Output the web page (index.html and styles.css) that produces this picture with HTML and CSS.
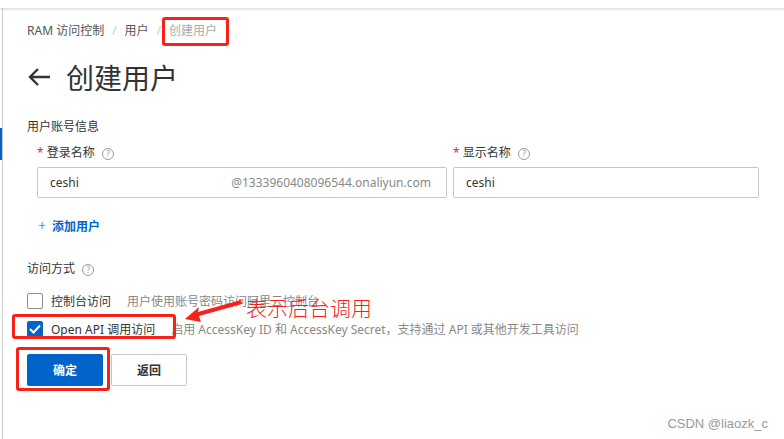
FILE: index.html
```html
<!DOCTYPE html>
<html lang="zh-CN">
<head>
    <meta charset="UTF-8">
    <meta name="viewport" content="width=device-width, initial-scale=1.0">
    <title>创建用户 - RAM 访问控制</title>
    <link rel="stylesheet" href="styles.css">
</head>
<body>

<div class="topbar"></div>

<div class="layout">
    <div class="rail"><div class="rail-mark"></div></div>

    <div class="page">
        <div class="breadcrumb">
            <span class="crumb">RAM 访问控制</span>
            <span class="sep">/</span>
            <span class="crumb">用户</span>
            <span class="sep">/</span>
            <span class="crumb current">创建用户</span>
        </div>

        <h1 class="title">
            <svg class="back" width="24" height="20" viewBox="0 0 24 20">
                <path d="M23 10H3M11 2L3 10l8 8" fill="none" stroke="#333" stroke-width="2.4"/>
            </svg>
            创建用户
        </h1>

        <div class="section-title">用户账号信息</div>

        <div class="form-grid">
            <div class="field">
                <div class="label"><span class="req">*</span> 登录名称 <span class="help">?</span></div>
                <div class="input">
                    <span>ceshi</span>
                    <span class="suffix">@1333960408096544.onaliyun.com</span>
                </div>
            </div>
            <div class="field">
                <div class="label"><span class="req">*</span> 显示名称 <span class="help">?</span></div>
                <div class="input"><span>ceshi</span></div>
            </div>
        </div>

        <div class="add-user"><span class="plus">+</span><b>添加用户</b></div>

        <div class="section-title access">访问方式 <span class="help">?</span></div>

        <div class="options">
            <label class="option">
                <span class="checkbox"></span>
                <span class="opt-name">控制台访问</span>
                <span class="opt-desc">用户使用账号密码访问阿里云控制台</span>
            </label>
            <label class="option">
                <span class="checkbox checked">
                    <svg width="12" height="10" viewBox="0 0 12 10"><path d="M1 5l3.5 3.5L11 1.5" fill="none" stroke="#fff" stroke-width="2"/></svg>
                </span>
                <span class="opt-name">Open API 调用访问</span>
                <span class="opt-desc">启用 AccessKey ID 和 AccessKey Secret，支持通过 API 或其他开发工具访问</span>
            </label>
        </div>

        <div class="actions">
            <button class="btn primary">确定</button>
            <button class="btn">返回</button>
        </div>
    </div>
</div>

<!-- annotations drawn on top of the screenshot -->
<div class="mark mark-crumb"></div>
<div class="mark mark-api"></div>
<div class="mark mark-ok"></div>
<svg class="note-arrow" width="60" height="24" viewBox="0 0 60 24">
    <path d="M1 20L15 8l-1 5L57 1l1 4L15 17l2 6z" fill="#f5221a"/>
</svg>
<div class="note-text">表示后台调用</div>
<div class="watermark">CSDN @liaozk_c</div>

</body>
</html>
```

FILE: styles.css
```css
body {
    margin: 0;
    font-family: "Noto Sans", "Noto Sans CJK SC", sans-serif;
    font-size: 12px;
    color: #333;
    background: #fff;
    height: 439px;
    overflow: hidden;
    position: relative;
}
.topbar {
    height: 8px;
    background: #fff;
    box-shadow: 0 1px 3px rgba(0, 0, 0, 0.18);
    position: relative;
    z-index: 1;
}
.layout {
    display: flex;
    height: 431px;
}
.rail {
    width: 2px;
}
.rail-mark {
    margin-top: 120px;
    height: 32px;
    background: #0064c8;
}
.page {
    flex: 1;
    border-left: 1px solid #c9cdd3;
    padding: 13px 0 0 24px;
}
.breadcrumb {
    height: 20px;
    line-height: 20px;
    display: flex;
    gap: 8px;
    color: #555;
}
.sep {
    color: #ccc;
}
.current {
    color: #aaa;
}
.title {
    margin: 18px 0 0;
    height: 36px;
    display: flex;
    align-items: center;
    gap: 15px;
    font-size: 28px;
    font-weight: normal;
    color: #333;
}
.back {
    display: block;
}
.section-title {
    margin-top: 22px;
    height: 20px;
    line-height: 20px;
}
.form-grid {
    margin: 6px 0 0 10px;
    display: grid;
    grid-template-columns: 410px 306px;
    gap: 6px;
}
.label {
    height: 20px;
    line-height: 20px;
    margin-bottom: 4px;
}
.req {
    color: #d93026;
}
.help {
    display: inline-block;
    width: 10px;
    height: 10px;
    line-height: 10px;
    border: 1px solid #999;
    border-radius: 50%;
    color: #999;
    font-size: 8px;
    text-align: center;
    margin-left: 4px;
    vertical-align: middle;
}
.input {
    height: 29px;
    border: 1px solid #c4c6cc;
    border-radius: 2px;
    display: flex;
    align-items: center;
    justify-content: space-between;
    padding: 0 15px 0 12px;
}
.suffix {
    color: #888;
}
.add-user {
    margin: 18px 0 0 11px;
    height: 20px;
    line-height: 20px;
    color: #0064c8;
}
.plus {
    font-size: 14px;
    font-weight: 300;
    margin-right: 6px;
}
.add-user b {
    font-weight: 600;
}
.access {
    margin-top: 23px;
}
.options {
    margin-top: 12px;
    display: flex;
    flex-direction: column;
    gap: 8px;
}
.option {
    height: 20px;
    display: flex;
    align-items: center;
}
.checkbox {
    width: 14px;
    height: 14px;
    border: 1px solid #8a8d93;
    border-radius: 2px;
    display: flex;
    align-items: center;
    justify-content: center;
    margin-right: 8px;
}
.checkbox.checked {
    background: #0064c8;
    border-color: #0064c8;
}
.opt-name {
    color: #333;
}
.opt-desc {
    margin-left: 16px;
    color: #888;
}
.actions {
    margin-top: 15px;
    display: flex;
    gap: 8px;
}
.btn {
    width: 76px;
    height: 32px;
    border: 1px solid #c4c6cc;
    border-radius: 2px;
    background: #fff;
    color: #333;
    font-family: inherit;
    font-size: 12px;
    font-weight: 600;
}
.btn.primary {
    background: #0064c8;
    border-color: #0064c8;
    color: #fff;
}
.mark {
    position: absolute;
    border: 3px solid #f5221a;
    border-radius: 3px;
}
.mark-crumb {
    left: 162px;
    top: 17px;
    width: 61px;
    height: 23px;
}
.mark-api {
    left: 12px;
    top: 314px;
    width: 158px;
    height: 19px;
}
.mark-ok {
    left: 16px;
    top: 347px;
    width: 88px;
    height: 38px;
}
.note-arrow {
    position: absolute;
    left: 184px;
    top: 299px;
}
.note-text {
    position: absolute;
    left: 246px;
    top: 294px;
    font-size: 21px;
    line-height: 28px;
    color: #f5221a;
    font-weight: 300;
}
.watermark {
    position: absolute;
    right: 16px;
    bottom: 8px;
    font-family: "Liberation Sans", Arial, sans-serif;
    font-size: 13px;
    color: #999;
}
```
